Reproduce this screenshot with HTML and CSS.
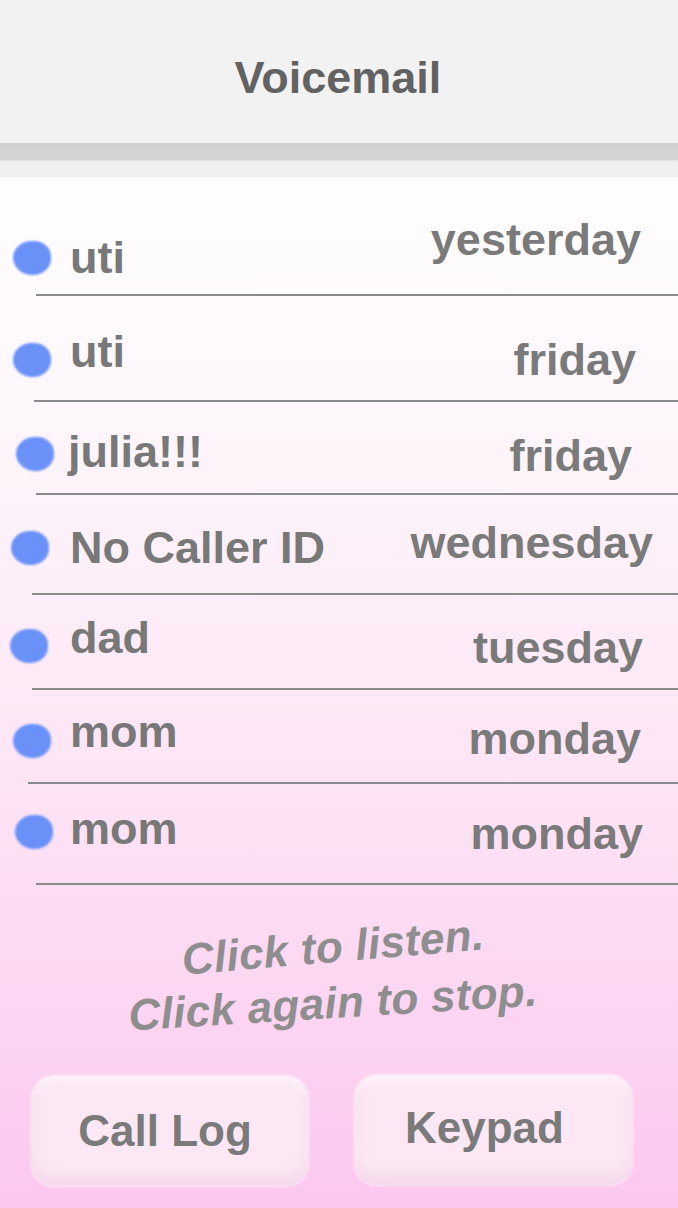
FILE: index.html
```html
<!DOCTYPE html>
<html lang="en">
<head>
<meta charset="utf-8">
<title>Voicemail</title>
<link rel="stylesheet" href="styles.css">
</head>
<body>
<div class="screen">
  <header class="topbar">
    <h1 class="title">Voicemail</h1>
  </header>
  <main class="list">
    <div class="row r1"><span class="dot"></span><span class="name">uti</span><span class="date">yesterday</span></div>
    <div class="rule u1"></div>
    <div class="row r2"><span class="dot"></span><span class="name">uti</span><span class="date">friday</span></div>
    <div class="rule u2"></div>
    <div class="row r3"><span class="dot"></span><span class="name">julia!!!</span><span class="date">friday</span></div>
    <div class="rule u3"></div>
    <div class="row r4"><span class="dot"></span><span class="name">No Caller ID</span><span class="date">wednesday</span></div>
    <div class="rule u4"></div>
    <div class="row r5"><span class="dot"></span><span class="name">dad</span><span class="date">tuesday</span></div>
    <div class="rule u5"></div>
    <div class="row r6"><span class="dot"></span><span class="name">mom</span><span class="date">monday</span></div>
    <div class="rule u6"></div>
    <div class="row r7"><span class="dot"></span><span class="name">mom</span><span class="date">monday</span></div>
    <div class="rule u7"></div>
  </main>
  <p class="hint">
    <span class="hint-line l1">Click to listen.</span>
    <span class="hint-line l2">Click again to stop.</span>
  </p>
  <nav class="actions">
    <button class="btn">Call Log</button>
    <button class="btn btn-right">Keypad</button>
  </nav>
</div>
</body>
</html>
```
FILE: styles.css
```css
html, body {
  margin: 0;
  padding: 0;
}
body {
  width: 678px;
  height: 1208px;
  overflow: hidden;
  font-family: "Liberation Sans", Arial, sans-serif;
}
.screen {
  width: 678px;
  height: 1208px;
  display: flex;
  flex-direction: column;
  background: linear-gradient(to bottom,
    #fffefe 0px,
    #fffdfe 200px,
    #fdf7fb 400px,
    #fdeef8 600px,
    #fde3f5 800px,
    #fcd6f2 1000px,
    #fcc7ef 1208px);
}
.topbar {
  height: 177px;
  box-sizing: border-box;
  padding-top: 55px;
  background: linear-gradient(to bottom,
    #f2f2f2 0px, #f2f2f2 143px,
    #cdcdcd 143px, #d2d2d2 146px, #d6d6d6 160px,
    #efefef 161px, #f0f0f0 177px);
}
.title {
  margin: 0;
  text-align: center;
  font-size: 45px;
  line-height: 45px;
  font-weight: bold;
  color: #626262;
  padding-right: 2px;
}
.list {
  display: flex;
  flex-direction: column;
}
.row {
  display: grid;
  grid-template-columns: 70px 1fr auto;
  align-items: start;
  font-size: 45px;
  line-height: 45px;
  font-weight: bold;
  color: #787878;
}
.dot {
  width: 38px;
  height: 34px;
  border-radius: 50% 46% 48% 52%;
  background: #6a91f8;
  filter: blur(0.9px);
}
.name { white-space: nowrap; }
.date { white-space: nowrap; color: #7a7a7a; }
.rule {
  height: 2px;
  background: #8a8a8a;
}

.r1 { height: 117px; }
.r1 .dot { margin: 64px 0 0 13px; }
.r1 .name { margin-top: 58px; }
.r1 .date { margin: 40px 37px 0 0; }
.u1 { margin-left: 36px; }

.r2 { height: 104px; }
.r2 .dot { margin: 47px 0 0 13px; }
.r2 .name { margin-top: 33px; }
.r2 .date { margin: 41px 42px 0 0; }
.u2 { margin-left: 34px; }

.r3 { height: 91px; }
.r3 .dot { margin: 35px 0 0 16px; }
.r3 .name { margin: 27px 0 0 -2px; }
.r3 .date { margin: 31px 46px 0 0; }
.u3 { margin-left: 36px; }

.r4 { height: 98px; }
.r4 .dot { margin: 36px 0 0 11px; }
.r4 .name { margin-top: 30px; }
.r4 .date { margin: 25px 25px 0 0; }
.u4 { margin-left: 32px; }

.r5 { height: 93px; }
.r5 .dot { margin: 34px 0 0 10px; }
.r5 .name { margin-top: 20px; }
.r5 .date { margin: 30px 35px 0 0; }
.u5 { margin-left: 32px; }

.r6 { height: 92px; }
.r6 .dot { margin: 34px 0 0 13px; }
.r6 .name { margin-top: 19px; }
.r6 .date { margin: 26px 37px 0 0; }
.u6 { margin-left: 28px; }

.r7 { height: 99px; }
.r7 .dot { margin: 31px 0 0 15px; }
.r7 .name { margin-top: 22px; }
.r7 .date { margin: 27px 35px 0 0; }
.u7 { margin-left: 36px; }

.hint {
  margin: 34px 0 0 0;
  padding-right: 12px;
  text-align: center;
  font-size: 44px;
  line-height: 56px;
  font-weight: bold;
  font-style: italic;
  color: #8e8e8e;
}
.hint-line { display: block; }
.l1 { transform: rotate(-4.8deg); letter-spacing: 0.3px; }
.l2 { transform: rotate(-3.5deg); letter-spacing: 0.3px; }

.actions {
  margin-top: 45px;
  display: grid;
  grid-template-columns: 276px 277px;
  column-gap: 47px;
  padding-left: 32px;
}
.btn {
  height: 110px;
  border: none;
  border-radius: 22px;
  padding: 0 10px 0 0;
  background: #fbe8f4;
  box-shadow:
    inset 0 -10px 12px rgba(240, 205, 228, 0.55),
    inset 0 6px 8px rgba(255, 245, 251, 0.8),
    0 0 3px 1px rgba(253, 236, 247, 0.9);
  font-family: "Liberation Sans", Arial, sans-serif;
  font-size: 44px;
  line-height: 44px;
  font-weight: bold;
  color: #7a7a7a;
}
.btn-right { margin-top: -1px; padding-right: 18px; padding-bottom: 4px; }
```
